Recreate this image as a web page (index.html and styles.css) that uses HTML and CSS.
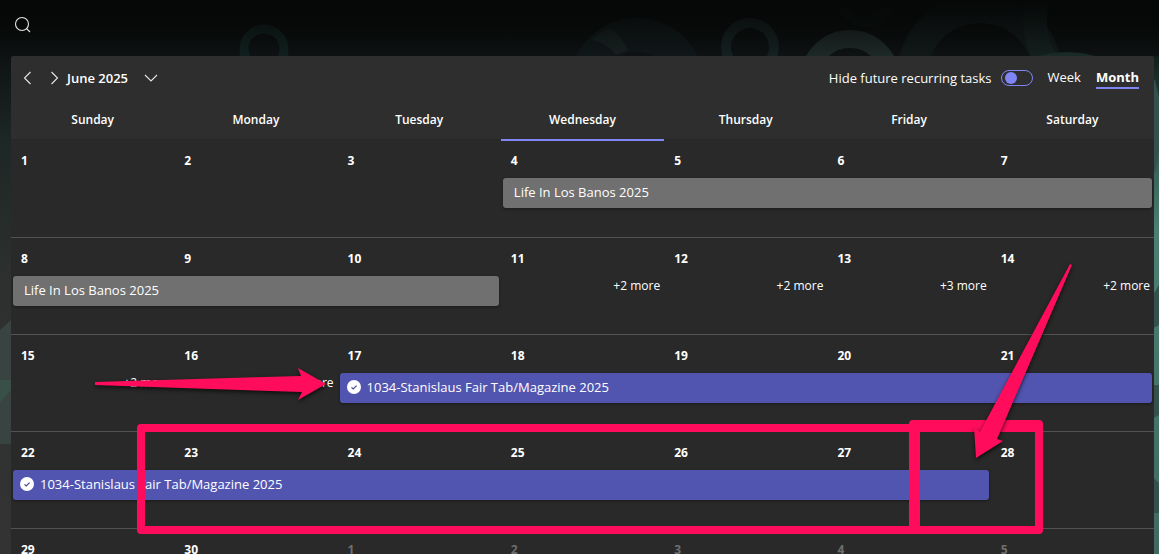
FILE: index.html
```html
<!DOCTYPE html>
<html lang="en">
<head>
<meta charset="utf-8">
<title>Schedule – June 2025</title>
<link rel="stylesheet" href="styles.css">
</head>
<body>
<svg class="backdrop" viewBox="0 0 1159 554" preserveAspectRatio="none" aria-hidden="true">
  <defs>
    <linearGradient id="shade" x1="0" y1="0" x2="0" y2="1">
      <stop offset="0" stop-color="#060707"/>
      <stop offset="0.1" stop-color="#0e1212"/>
      <stop offset="0.25" stop-color="#1d2725"/>
      <stop offset="0.5" stop-color="#2d302f"/>
      <stop offset="1" stop-color="#333333"/>
    </linearGradient>
    <linearGradient id="fade" x1="0" y1="0" x2="0" y2="1">
      <stop offset="0" stop-color="#060707"/>
      <stop offset="1" stop-color="#060707" stop-opacity="0"/>
    </linearGradient>
    <linearGradient id="edge" x1="0" y1="0" x2="0" y2="1">
      <stop offset="0" stop-color="#111d1b"/>
      <stop offset="0.12" stop-color="#2c4a43"/>
      <stop offset="0.35" stop-color="#4c7f71"/>
      <stop offset="1" stop-color="#41695f"/>
    </linearGradient>
  </defs>
  <rect width="1159" height="554" fill="url(#shade)"/>
  <g fill="none">
    <circle cx="264" cy="49" r="20" stroke="#10201e" stroke-width="9"/>
    <circle cx="637" cy="85" r="50" stroke="#101718" stroke-width="34"/>
    <path d="M592 40a66 66 0 0 1 18-12 54 54 0 0 1 18 22l-12 5a40 40 0 0 0-24-15z" fill="#172020"/>
    <circle cx="750" cy="47" r="24" stroke="#152020" stroke-width="10"/>
    <circle cx="850" cy="80" r="41" stroke="#1d2927" stroke-width="18"/>
    <circle cx="865" cy="-2" r="24" stroke="#0d1212" stroke-width="10"/>
    <circle cx="980" cy="76" r="68" stroke="#111918" stroke-width="30"/>
    <circle cx="1110" cy="20" r="75" stroke="#14201e" stroke-width="24"/>
    <circle cx="1067" cy="150" r="90" stroke="#1a2b27" stroke-width="16"/>
  </g>
  <rect width="1159" height="56" fill="url(#fade)"/>
  <rect x="1150" y="56" width="9" height="498" fill="url(#edge)"/>
  <path d="M1150 80l5 0 4 18v52l-4 22h-5zM1150 300l9-15v40l-9 5zM1150 385h9v30l-9 5zM1150 475l9 8v30h-9z" fill="#34514b"/>
  <path d="M0 330l11-10v124H0z" fill="#394341"/>
  <path d="M0 380h11v10l-11 13z" fill="#385048"/>
</svg>

<header class="topbar">
  <button class="icon-btn" aria-label="Search">
    <svg width="18" height="18" viewBox="0 0 18 18"><circle cx="8" cy="8" r="6.5"/><path d="M12.300 12.300L16 16"/></svg>
  </button>
</header>

<main class="panel">
  <div class="toolbar">
    <div class="period">
      <button class="icon-btn" aria-label="Previous month"><svg width="12" height="14" viewBox="0 0 12 14"><path d="M9.500 1L3.500 7l6 6"/></svg></button>
      <button class="icon-btn" aria-label="Next month"><svg width="12" height="14" viewBox="0 0 12 14"><path d="M3.500 1l6 6-6 6"/></svg></button>
      <button class="month-btn">June 2025 <svg width="14" height="8" viewBox="0 0 14 8"><path d="M1 1l6 6 6-6"/></svg></button>
    </div>
    <div class="options">
      <label class="toggle">Hide future recurring tasks <input type="checkbox" role="switch"></label>
      <button class="view">Week</button>
      <button class="view selected" aria-pressed="true">Month</button>
    </div>
  </div>

  <table class="calendar">
    <thead>
      <tr><th>Sunday</th><th>Monday</th><th>Tuesday</th><th class="today">Wednesday</th><th>Thursday</th><th>Friday</th><th>Saturday</th></tr>
    </thead>
    <tbody class="first">
      <tr class="dates"><td>1</td><td>2</td><td>3</td><td>4</td><td>5</td><td>6</td><td>7</td></tr>
      <tr class="events"><td colspan="3"></td><td colspan="4"><button class="event gray">Life In Los Banos 2025</button></td></tr>
    </tbody>
    <tbody>
      <tr class="dates"><td>8</td><td>9</td><td>10</td><td>11</td><td>12</td><td>13</td><td>14</td></tr>
      <tr class="events"><td colspan="3"><button class="event gray">Life In Los Banos 2025</button></td><td><button class="more">+2 more</button></td><td><button class="more">+2 more</button></td><td><button class="more">+3 more</button></td><td><button class="more">+2 more</button></td></tr>
    </tbody>
    <tbody>
      <tr class="dates"><td>15</td><td>16</td><td>17</td><td>18</td><td>19</td><td>20</td><td>21</td></tr>
      <tr class="events"><td><button class="more">+2 more</button></td><td><button class="more">+2 more</button></td><td colspan="5"><button class="event violet"><svg width="14" height="14" viewBox="0 0 14 14"><circle cx="7" cy="7" r="7"/><path d="M4.500 7.300l1.700 1.700 3.400-3.400"/></svg>1034-Stanislaus Fair Tab/Magazine 2025</button></td></tr>
    </tbody>
    <tbody>
      <tr class="dates"><td>22</td><td>23</td><td>24</td><td>25</td><td>26</td><td>27</td><td>28</td></tr>
      <tr class="events"><td colspan="6"><button class="event violet"><svg width="14" height="14" viewBox="0 0 14 14"><circle cx="7" cy="7" r="7"/><path d="M4.500 7.300l1.700 1.700 3.400-3.400"/></svg>1034-Stanislaus Fair Tab/Magazine 2025</button></td><td></td></tr>
    </tbody>
    <tbody>
      <tr class="dates"><td>29</td><td>30</td><td class="next">1</td><td class="next">2</td><td class="next">3</td><td class="next">4</td><td class="next">5</td></tr>
      <tr class="events"><td colspan="7"></td></tr>
    </tbody>
  </table>
</main>

<svg class="markup" width="1159" height="554" viewBox="0 0 1159 554" aria-hidden="true">
  <rect x="141" y="428" width="775" height="102"/>
  <rect x="913" y="424" width="126" height="106"/>
  <path d="M913 424h126v8H913z"/>
  <g class="arrows">
    <path d="M95 382L301 376l-3-8 28 16-28 16 4-8L95 385z"/>
    <path d="M1070 264l2 1-75 174 6 2-27 17-2-31 6 5z"/>
  </g>
</svg>
</body>
</html>
```
FILE: styles.css
```css
* {
  box-sizing: border-box;
}

body {
  margin: 0;
  position: relative;
  height: 100vh;
  overflow: hidden;
  background: #2d302f;
  color: #fff;
  font: 13px/20px "Open Sans", "Noto Sans", sans-serif;
}

button {
  margin: 0;
  padding: 0;
  border: 0;
  background: none;
  color: inherit;
  font: inherit;
  cursor: pointer;
}

.backdrop {
  position: absolute;
  inset: 0;
  width: 100%;
  height: 100%;
  z-index: -1;
}

.topbar {
  display: flex;
  align-items: center;
  height: 56px;
  padding: 0 14px 7px;
}

.icon-btn,
.month-btn {
  display: flex;
  align-items: center;
}

.icon-btn svg,
.month-btn svg {
  fill: none;
  stroke: #e6e6e6;
  stroke-width: 1.1;
}

.panel {
  margin: 0 5px 0 11px;
  background: #292929;
  border-radius: 3px 3px 0 0;
}

.toolbar {
  display: flex;
  justify-content: space-between;
  align-items: center;
  height: 44px;
  padding: 0 15px 0 10px;
  background: #2e2e2e;
  border-radius: 3px 3px 0 0;
}

.period {
  display: flex;
  align-items: center;
}

.period .icon-btn {
  margin-right: 15px;
}

.period .icon-btn + .icon-btn {
  margin-right: 7px;
}

.month-btn {
  gap: 16px;
  font-weight: 600;
}

.options {
  display: flex;
  align-items: center;
  gap: 15px;
}

.toggle {
  display: flex;
  align-items: center;
  gap: 9px;
}

.toggle input {
  appearance: none;
  display: flex;
  align-items: center;
  width: 32px;
  height: 16px;
  margin: 0;
  padding: 0 3px;
  border: 1px solid #7f85f5;
  border-radius: 8px;
}

.toggle input::before {
  content: "";
  width: 12px;
  height: 12px;
  border-radius: 50%;
  background: #7f85f5;
}

.view {
  height: 22px;
  border-bottom: 2px solid transparent;
}

.view.selected {
  font-weight: 700;
  border-bottom-color: #7f85f5;
}

.calendar {
  width: 100%;
  table-layout: fixed;
  border-collapse: separate;
  border-spacing: 0;
}

.calendar td,
.calendar th {
  padding: 0;
}

.calendar th {
  height: 41px;
  padding-top: 1px;
  border-bottom: 2px solid #292929;
  background: #2e2e2e;
  font-size: 12px;
  font-weight: 600;
}

.calendar th.today {
  border-bottom-color: #7f85f5;
}

.dates td {
  height: 38px;
  padding: 4px 0 0 10px;
  font-size: 12px;
  font-weight: 700;
}

.first .dates td {
  height: 37px;
  padding-top: 2px;
}

.dates .next {
  color: #6e6e6e;
}

.events td {
  height: 59px;
  vertical-align: top;
  border-bottom: 1px solid #525252;
}

.first .events td {
  height: 60px;
}

.event {
  display: flex;
  align-items: center;
  gap: 6px;
  width: calc(100% - 4px);
  height: 30px;
  margin: 0 2px;
  padding: 0 11px 2px;
  border-radius: 3px;
  box-shadow: 0 1px 3px #00000066;
}

.event.gray {
  background: #707070;
}

.event.violet {
  padding: 0 7px 2px;
  background: #5255b0;
}

.event circle {
  fill: #fff;
}

.event path {
  fill: none;
  stroke: #444791;
  stroke-width: 1.2;
}

.more {
  display: block;
  margin-left: auto;
  padding-right: 4px;
  font-size: 12px;
}

.markup {
  position: absolute;
  top: 0;
  left: 0;
  pointer-events: none;
}

.markup rect {
  fill: none;
  stroke: #ff0d5c;
  stroke-width: 8;
  stroke-linejoin: round;
}

.markup path {
  fill: #ff0d5c;
}

.arrows {
  filter: drop-shadow(0 2px 2px #000000aa);
}
```
